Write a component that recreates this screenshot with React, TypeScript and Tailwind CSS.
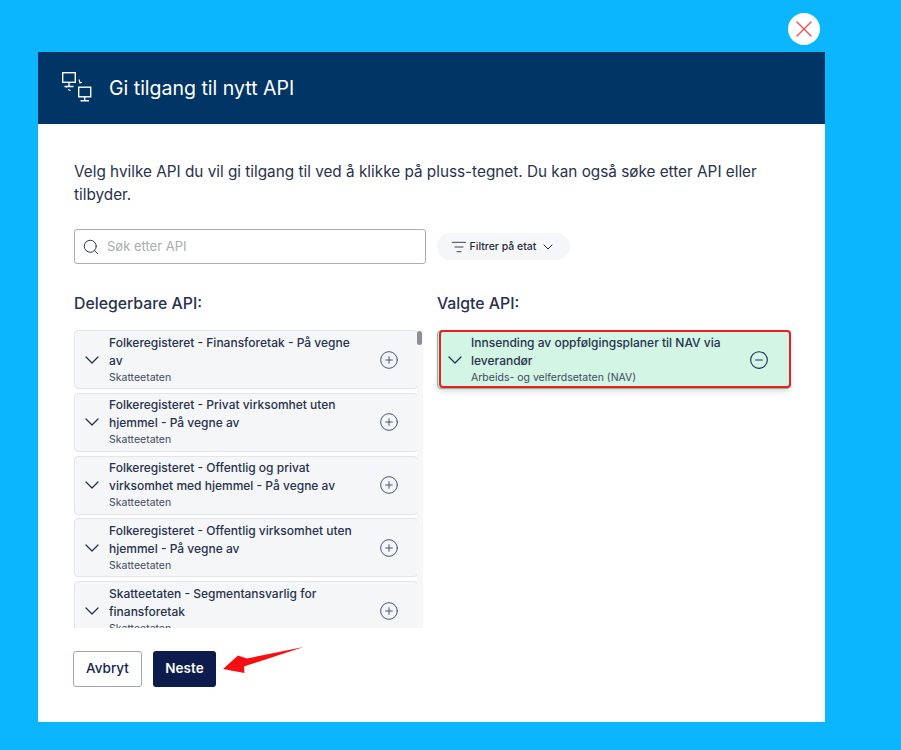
// App.tsx — API delegation modal
import { ChevronDown, Search, CirclePlus, CircleMinus, ListFilter, X } from 'lucide-react'

const APIS = [
  { title: 'Folkeregisteret - Finansforetak - På vegne av', owner: 'Skatteetaten' },
  { title: 'Folkeregisteret - Privat virksomhet uten hjemmel - På vegne av', owner: 'Skatteetaten' },
  { title: 'Folkeregisteret - Offentlig og privat virksomhet med hjemmel - På vegne av', owner: 'Skatteetaten' },
  { title: 'Folkeregisteret - Offentlig virksomhet uten hjemmel - På vegne av', owner: 'Skatteetaten' },
  { title: 'Skatteetaten - Segmentansvarlig for finansforetak', owner: 'Skatteetaten' },
]

function MonitorsIcon() {
  return (
    <svg width="32" height="32" viewBox="0 0 32 32" fill="none" stroke="white" strokeWidth="1.4" className="shrink-0">
      <rect x="1.7" y="0.7" width="12.6" height="9.6" />
      <path d="M8 10.5v3.5M3.5 14.5h9" />
      <rect x="17.7" y="15.2" width="12" height="9.6" />
      <path d="M23.7 25v3M19.5 28.7h8.5" />
      <path d="M18 7.5l1 3.5 2-.8M9.5 18.5l-2.5-1M6 15.5l-.6-.6" strokeWidth="1.1" />
    </svg>
  )
}

function ApiRow({ title, owner }: { title: string; owner: string }) {
  return (
    <div className="flex items-center h-[59px] shrink-0 rounded-[4px] border border-[#e3e5ea] bg-[#f5f6f8] pl-[5px] pr-[18px]">
      <ChevronDown size={24} strokeWidth={1.2} className="shrink-0 text-[#1c2b4a]" />
      <div className="flex-1 ml-[5px] min-w-0">
        <div className="max-w-[250px] text-[12px] leading-[18px] font-medium text-[#27324d]">{title}</div>
        <div className="text-[10.5px] leading-[16px] text-[#3f4a60]">{owner}</div>
      </div>
      <CirclePlus size={20} strokeWidth={1.1} className="shrink-0 ml-[10px] text-[#3a4672]" />
    </div>
  )
}

export default function App() {
  return (
    <div className="relative w-[901px] h-[750px] overflow-hidden bg-[#0cb6ff] pt-[52px] pl-[38px] font-['Inter',sans-serif]">
      {/* Close */}
      <button className="absolute left-[788px] top-[13px] w-8 h-8 rounded-full bg-white flex items-center justify-center">
        <X size={28} strokeWidth={1.1} className="text-[#f0474a]" />
      </button>

      <div className="w-[786.5px] h-[670px] bg-white flex flex-col">
        {/* Top bar */}
        <div className="h-[72px] shrink-0 bg-[#003566] flex items-center pl-[23px] gap-[16px]">
          <MonitorsIcon />
          <h2 className="mt-[2px] text-[19.5px] font-normal text-white">Gi tilgang til nytt API</h2>
        </div>

        {/* Content */}
        <div className="flex-1 flex flex-col pl-[36px] pr-[33px] pt-[36px]">
          <p className="text-[15.3px] leading-[23px] text-[#27324d]">
            Velg hvilke API du vil gi tilgang til ved å klikke på pluss-tegnet. Du kan også søke etter API eller tilbyder.
          </p>

          <div className="flex items-center gap-[11px] mt-[23px]">
            <div className="w-[352px] h-[35px] rounded-[3px] border border-[#a8adb8] flex items-center pl-[7px] gap-[7px]">
              <Search size={18} strokeWidth={1.3} className="text-[#27324d]" />
              <span className="text-[13px] text-[#a9acb2]">Søk etter API</span>
            </div>
            <div className="w-[133px] h-[27px] rounded-full bg-[#f5f6f7] flex items-center justify-center gap-[3px]">
              <ListFilter size={16} strokeWidth={1.3} className="text-[#1f2937]" />
              <span className="text-[10.5px] font-medium text-[#1f2937]">Filtrer på etat</span>
              <ChevronDown size={16} strokeWidth={1.5} className="ml-[1px] text-[#1f2937]" />
            </div>
          </div>

          <div className="flex mt-[30px] gap-[14px]">
            <div className="w-[349px]">
              <h3 className="text-[15.8px] leading-[20px] font-medium text-[#27324d]">Delegerbare API:</h3>
              <div className="relative mt-[16px] h-[298px] overflow-hidden pr-[5px] flex flex-col gap-[3.75px]">
                {APIS.map((a) => (
                  <ApiRow key={a.title} {...a} />
                ))}
                {/* Scrollbar */}
                <div className="absolute right-0 top-0 bottom-0 w-[6px] bg-[#f7f7f8]">
                  <div className="mt-[1px] h-[14px] w-[5px] rounded-full bg-[#8d8f94]" />
                </div>
              </div>
            </div>

            <div className="flex-1">
              <h3 className="text-[15.8px] leading-[20px] font-medium text-[#27324d]">Valgte API:</h3>
              <div className="relative mt-[16px] w-[354px] h-[59px] rounded-[4px] border border-[#6fc19a] bg-[#d3f5e4] shadow-md flex items-center pl-[5px] pr-[21px]">
                <ChevronDown size={24} strokeWidth={1.2} className="shrink-0 text-[#1c2b4a]" />
                <div className="flex-1 ml-[4px] min-w-0">
                  <div className="text-[12px] leading-[18px] font-medium text-[#27324d]">
                    Innsending av oppfølgingsplaner til NAV via leverandør
                  </div>
                  <div className="text-[10.5px] leading-[16px] text-[#3f4a60]">Arbeids- og velferdsetaten (NAV)</div>
                </div>
                <CircleMinus size={20} strokeWidth={1.3} className="shrink-0 ml-[10px] text-[#1c2b5a]" />
                {/* Red annotation box */}
                <div className="absolute left-[1px] -top-[1.5px] -right-px h-[58px] rounded-[4px] border-2 border-[#ee1c25]" />
              </div>
            </div>
          </div>

          {/* Actions */}
          <div className="flex gap-[11px] mt-[23px] -ml-px">
            <button className="w-[69px] h-[36px] pb-px rounded-[3px] border border-[#9fa3bd] text-[13.5px] font-medium text-[#131f4f]">
              Avbryt
            </button>
            <button className="w-[63px] h-[36px] pb-px rounded-[3px] bg-[#0e1b4d] text-[13.5px] font-semibold text-white">
              Neste
            </button>
          </div>
        </div>
      </div>

      {/* Red annotation arrow */}
      <svg className="absolute left-[220px] top-[644px]" width="88" height="34" viewBox="0 0 88 34">
        <path d="M3 25L18 11.5L27 14.5L83.5 3L24 22.5L24.5 29Z" fill="#f50f13" />
      </svg>
    </div>
  )
}
